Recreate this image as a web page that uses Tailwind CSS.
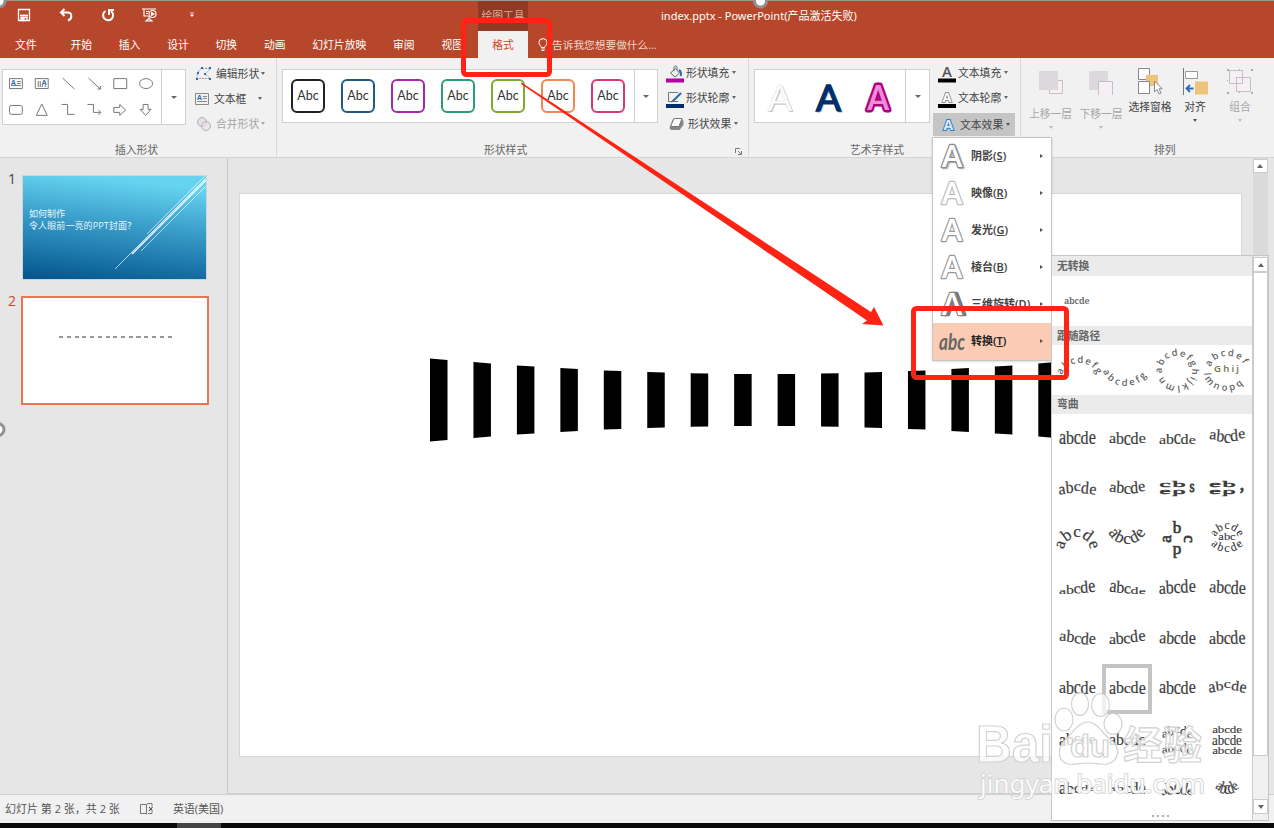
<!DOCTYPE html>
<html lang="zh-CN">
<head>
    <meta charset="UTF-8"/>
    <meta name="viewport" content="width=device-width, initial-scale=1.0"/>
    <title>index.pptx - PowerPoint</title>
    <script src="https://cdn.jsdelivr.net/npm/@tailwindcss/browser@4"></script>
</head>
<body class="relative w-[1274px] h-[828px] overflow-hidden flex flex-col bg-[#e6e6e6] text-[10.8px] leading-4 text-[#444] font-['Open_Sans','Noto_Sans_CJK_SC',sans-serif] whitespace-nowrap">

<!-- 标题栏 -->
<header class="h-[58px] shrink-0 bg-[#b7472a] text-white border-t border-[#999] flex flex-col">
    <div class="h-[30px] flex items-center">
        <div class="w-[478px] h-full flex items-center pl-[17px] pb-[2px]">
            <svg class="w-[14px] h-[14px]" viewBox="0 0 14 14" fill="none" stroke="#fff" stroke-width="1.3"><path d="M1.500 1.500h11v11h-11z"/><path d="M3 7.500h8" stroke-width="1.800"/><path d="M4 12V9.500h6V12"/><path d="M5 10h2v2.500H5z" fill="#fff"/></svg>
            <svg class="w-[14px] h-[14px] ml-[28px]" viewBox="0 0 14 14" fill="none" stroke="#fff" stroke-width="2"><path d="M5.500 1L2 4.500L5.500 8M2 4.500h6.500c5 0 5 6.500 .5 8"/></svg>
            <svg class="w-[14px] h-[14px] ml-[28px]" viewBox="0 0 14 14" fill="none" stroke="#fff" stroke-width="2"><path d="M4.500 3A5 5 0 1 0 10 3.200"/><path d="M8 7V2h5" stroke-width="1.800"/></svg>
            <svg class="w-[16px] h-[14px] ml-[27px]" viewBox="0 0 16 14" fill="none" stroke="#fff" stroke-width="1.100"><path d="M0 1h14M2 1v7h4M4 3.500h3M4 5.500h2M7 8v3M4 13l3-2.500L10 13z"/><circle cx="10.500" cy="6" r="3.500"/><path d="M9.500 4.500L12 6l-2.500 1.500z" fill="#fff"/></svg>
            <svg class="w-[6px] h-[6px] ml-[31px]" viewBox="0 0 6 6" fill="#fff"><path d="M1 .5h4v.8H1zM.8 2.500h4.400L3 5z"/></svg>
        </div>
        <div class="w-[50px] h-full bg-[#8f3a23] text-[#e0a898] text-center leading-[29px]">绘图工具</div>
        <div class="ml-[133px] text-[11px] font-['Noto_Sans','Noto_Sans_CJK_SC',sans-serif]">index.pptx - PowerPoint(产品激活失败)</div>
    </div>
    <nav class="h-[27px] flex items-center">
        <a class="w-[57px] pl-[15px]">文件</a>
        <a class="px-[13.400px]">开始</a>
        <a class="px-[13.400px]">插入</a>
        <a class="px-[13.400px]">设计</a>
        <a class="px-[13.400px]">切换</a>
        <a class="px-[13.400px]">动画</a>
        <a class="px-[13.400px]">幻灯片放映</a>
        <a class="px-[13.400px]">审阅</a>
        <a class="w-[50px] pl-[13.400px]">视图</a>
        <a class="w-[50px] h-full bg-[#f1f1f1] text-[#d24726] text-center leading-[27px]">格式</a>
        <svg class="w-[10px] h-[14px] ml-[10px]" viewBox="0 0 10 14" fill="none" stroke="#fff"><path d="M3.300 9.500C3.300 8 1 7 1 4.600a4 4 0 0 1 8 0C9 7 6.700 8 6.700 9.500z"/><path d="M3.300 11h3.400M3.600 12.500h2.800"/></svg>
        <span class="ml-[4px] text-[10.700px] text-[#f3d5cc]">告诉我您想要做什么...</span>
    </nav>
</header>

<!-- 功能区 -->
<section class="h-[100px] shrink-0 bg-[#f1f1f1] border-b border-[#d5d5d5] flex">
    <div class="w-[277px] shrink-0 border-r border-[#dadada] flex flex-col justify-between pt-[11px] pl-[2px]">
        <div class="flex h-[56px]">
            <div class="w-[184px] bg-white border border-[#d0d0d0] flex">
                <svg class="w-[159px] h-[54px] border-r border-[#d0d0d0]" viewBox="0 0 159 54" fill="none" stroke="#777" stroke-width="1">
                    <g><path d="M6.500 8.500h13v10h-13zM14 11.500h4M14 13.500h4M8 15.500h10"/><text x="8" y="15" font-size="7" font-weight="bold" fill="#2b6cb5" stroke="none">A</text></g>
                    <g><path d="M32.500 8.500h13v10h-13zM35.500 11v6M37.500 11v6M39.500 15v2M42.500 15v2"/><text x="39" y="15" font-size="7" font-weight="bold" fill="#2b6cb5" stroke="none">A</text></g>
                    <path d="M60 8l12 11M86 8l12 11M98 16v3h-3M111.500 8.500h13v10h-13z"/>
                    <ellipse cx="144" cy="13.500" rx="6.500" ry="5"/>
                    <rect x="6.500" y="35.500" width="13" height="9" rx="2"/>
                    <path d="M39 34l5.500 11.500h-11zM59 34.500h6v10h7M85 34.500h6v8h7M96 40l2.500 2.500L96 45M111.500 37.500h6v-3l6 5.500l-6 5.500v-3h-6zM141 34.500h5v5h3l-5.500 6l-5.500-6h3z"/>
                </svg>
                <i class="m-auto border-x-[3px] border-x-transparent border-t-[3px] border-t-[#666]"></i>
            </div>
            <div class="ml-[9px] -mt-[1px] flex flex-col">
                <div class="h-[11px] flex items-center">
                    <svg class="w-[17px] h-[13px]" viewBox="0 0 17 13" fill="none" stroke="#999"><path d="M2 11.500C2 6 4 2 7 1.500h9L10 7l5 4.500z" stroke-dasharray="2 1"/><g fill="#2b6cb5" stroke="none"><path d="M6 0h2v2H6zM14 0h2v2h-2zM9 6h2v2H9zM14 11h2v2h-2zM1 11h2v2H1zM2 5h2v2H2z"/></g></svg>
                    <span class="ml-[4px]">编辑形状</span><i class="ml-[2px] border-x-[2.500px] border-x-transparent border-t-[3px] border-t-[#666]"></i>
                </div>
                <div class="h-[11px] mt-[14px] flex items-center">
                    <svg class="w-[14px] h-[12px]" viewBox="0 0 14 12" fill="none" stroke="#888"><path d="M.5 .5h13v11H.5zM8 3.500h4M8 5.500h4M2 8.500h10"/><text x="2" y="7" font-size="7" font-weight="bold" fill="#2b6cb5" stroke="none">A</text></svg>
                    <span class="ml-[5px]">文本框</span><i class="ml-[12px] border-x-[2.500px] border-x-transparent border-t-[3px] border-t-[#666]"></i>
                </div>
                <div class="h-[11px] mt-[14px] flex items-center text-[#a6a6a6]">
                    <svg class="w-[14px] h-[14px] ml-[2px]" viewBox="0 0 14 14" fill="#e6e0e6" stroke="#b5b0b5"><circle cx="5" cy="5" r="4.500"/><circle cx="9" cy="9" r="4.500" fill-opacity=".6"/></svg>
                    <span class="ml-[5px]">合并形状</span><i class="ml-[2px] border-x-[2.500px] border-x-transparent border-t-[3px] border-t-[#aaa]"></i>
                </div>
            </div>
        </div>
        <div class="text-center text-[#666] pr-[5px] -mb-px">插入形状</div>
    </div>

    <div class="w-[472px] shrink-0 border-r border-[#dadada] flex flex-col justify-between pt-[11px] pl-[5px]">
        <div class="flex h-[54px]">
            <div class="w-[376px] h-[54px] bg-white border border-[#d0d0d0] flex font-['Lato'] text-[12.5px] text-[#333]">
                <div class="w-[352px] border-r border-[#d0d0d0] flex items-center gap-[16px] pl-[8px]">
                    <span class="w-[34px] h-[34px] rounded-md border-2 border-[#222] text-center leading-[30px]">Abc</span>
                    <span class="w-[34px] h-[34px] rounded-md border-2 border-[#1f5c80] text-center leading-[30px]">Abc</span>
                    <span class="w-[34px] h-[34px] rounded-md border-2 border-[#a626b0] text-center leading-[30px]">Abc</span>
                    <span class="w-[34px] h-[34px] rounded-md border-2 border-[#2a9d78] text-center leading-[30px]">Abc</span>
                    <span class="w-[34px] h-[34px] rounded-md border-2 border-[#80a92f] text-center leading-[30px]">Abc</span>
                    <span class="w-[34px] h-[34px] rounded-md border-2 border-[#ec8a50] text-center leading-[30px]">Abc</span>
                    <span class="w-[34px] h-[34px] rounded-md border-2 border-[#d63a70] text-center leading-[30px]">Abc</span>
                </div>
                <i class="m-auto border-x-[3px] border-x-transparent border-t-[3px] border-t-[#666]"></i>
            </div>
            <div class="ml-[8px]">
                <div class="h-[11px] -mt-[2px] flex items-center">
                    <svg class="w-[18px] h-[18px] mt-[3px]" viewBox="0 0 18 18" fill="none" stroke="#666"><path d="M4.500 8l5-4.500l4 4.500l-4.500 4zM8 6V2.500a1.500 1.500 0 0 1 3 0V5"/><path d="M13 5c2 1 2.500 4 1.500 6" stroke="#2b6cb5" stroke-width="2"/><path d="M0 13.500h18v4H0z" fill="#b4009e" stroke="none"/></svg>
                    <span class="ml-[2px]">形状填充</span><i class="ml-[3px] border-x-[2.500px] border-x-transparent border-t-[3px] border-t-[#666]"></i>
                </div>
                <div class="h-[11px] mt-[14px] flex items-center">
                    <svg class="w-[18px] h-[18px] mt-[3px]" viewBox="0 0 18 18" fill="none" stroke="#777"><path d="M12 2.500H2.500v9H12"/><path d="M15 3L7.500 10.500" stroke="#2b6cb5" stroke-width="2.200"/><path d="M7.500 9.500l-2 2.500l2.500-1.500" stroke="#555"/><path d="M0 14h18v4H0z" fill="#002f6c" stroke="none"/></svg>
                    <span class="ml-[2px]">形状轮廓</span><i class="ml-[3px] border-x-[2.500px] border-x-transparent border-t-[3px] border-t-[#666]"></i>
                </div>
                <div class="h-[11px] mt-[15px] flex items-center">
                    <svg class="w-[15px] h-[14px] ml-[3px]" viewBox="0 0 15 14"><path d="M4 2h9l1.500 2v4l-4 5H2L.5 11z" fill="#888"/><path d="M5 1.500h8L10 9.500H1.500z" fill="#fff" stroke="#777"/></svg>
                    <span class="ml-[4px]">形状效果</span><i class="ml-[3px] border-x-[2.500px] border-x-transparent border-t-[3px] border-t-[#666]"></i>
                </div>
            </div>
        </div>
        <div class="flex items-center text-[#666] pl-[202px] -mb-px">形状样式
            <svg class="w-[7px] h-[7px] ml-[208px] mt-[3px]" viewBox="0 0 7 7" fill="none" stroke="#777"><path d="M.5 5V.5H5M3 3l3 3M6.500 3v3.500H3"/></svg>
        </div>
    </div>

    <div class="w-[272px] shrink-0 border-r border-[#dadada] flex flex-col justify-between pt-[11px] pl-[5px]">
        <div class="flex h-[54px]">
            <div class="w-[176px] h-[54px] bg-white border border-[#d0d0d0] flex">
                <svg class="w-[151px] h-[52px] border-r border-[#d0d0d0]" viewBox="0 0 151 52" font-family="Lato" font-size="37" text-anchor="middle">
                    <text x="26" y="42" fill="#bbb">A</text><text x="25" y="41" fill="#fff" stroke="#ddd" stroke-width=".5">A</text>
                    <text x="75" y="42" fill="#b4b8c4" stroke="#b4b8c4">A</text><text x="74" y="41" fill="#002f6c" stroke="#002f6c" stroke-width="1.500">A</text>
                    <text x="124" y="40.500" fill="#f28ad6" stroke="#a8007f" stroke-width="5" stroke-linejoin="round" paint-order="stroke" font-size="35" font-weight="bold" textLength="22" lengthAdjust="spacingAndGlyphs">A</text>
                </svg>
                <i class="m-auto border-x-[3px] border-x-transparent border-t-[3px] border-t-[#666]"></i>
            </div>
            <div class="ml-[3px]">
                <div class="h-[11px] -mt-[2px] pl-[5px] flex items-center">
                    <svg class="w-[18px] h-[18px] mt-[3px] overflow-visible" viewBox="0 0 18 18"><text x="4" y="12" font-size="15" font-weight="600" fill="#555">A</text><path d="M0 13.500h18v4H0z"/></svg>
                    <span class="ml-[2px]">文本填充</span><i class="ml-[3px] border-x-[2.500px] border-x-transparent border-t-[3px] border-t-[#666]"></i>
                </div>
                <div class="h-[11px] mt-[14px] pl-[5px] flex items-center">
                    <svg class="w-[18px] h-[18px] mt-[3px] overflow-visible" viewBox="0 0 18 18"><text x="4.500" y="12" font-size="13" font-weight="bold" fill="#fff" stroke="#777" stroke-width="1.500" paint-order="stroke">A</text><path d="M0 14h18v4H0z"/></svg>
                    <span class="ml-[2px]">文本轮廓</span><i class="ml-[3px] border-x-[2.500px] border-x-transparent border-t-[3px] border-t-[#666]"></i>
                </div>
                <div class="h-[23px] w-[82px] mt-[10px] pl-[9px] bg-[#c5c5c5] flex items-center">
                    <svg class="w-[13px] h-[14px] overflow-visible" viewBox="0 0 13 14"><text x="1.500" y="12" font-size="14" font-weight="bold" fill="#dce9f7" stroke="#2f7bd0" stroke-width="2" paint-order="stroke">A</text></svg>
                    <span class="ml-[5px]">文本效果</span><i class="ml-[3px] border-x-[2.500px] border-x-transparent border-t-[3px] border-t-[#555]"></i>
                </div>
            </div>
        </div>
        <div class="pl-[96px] text-[#666] -mb-px">艺术字样式</div>
    </div>

    <div class="flex-1 flex flex-col justify-between pt-[9px] pl-[4px] overflow-hidden">
        <div class="flex text-center">
            <div class="w-[51px] flex flex-col items-center text-[#a6a6a6]">
                <svg class="w-[26px] h-[28px]" viewBox="0 0 26 28"><path d="M11.500 13.500h13v13h-13z" fill="#f6eff6" stroke="#c5bfc5"/><path d="M1 4h19v19H1z" fill="#dcd8dc"/></svg>
                <span class="mt-[11px]">上移一层</span><i class="mt-[4px] border-x-[2.500px] border-x-transparent border-t-[3px] border-t-[#bbb]"></i>
            </div>
            <div class="w-[50px] flex flex-col items-center text-[#a6a6a6]">
                <svg class="w-[26px] h-[28px]" viewBox="0 0 26 28"><path d="M1 4h19v19H1z" fill="#dcd8dc"/><path d="M10.500 14.500h14v14h-14z" fill="#f6eff6" stroke="#c5bfc5"/></svg>
                <span class="mt-[11px]">下移一层</span><i class="mt-[4px] border-x-[2.500px] border-x-transparent border-t-[3px] border-t-[#bbb]"></i>
            </div>
            <div class="w-[48px] flex flex-col items-center">
                <svg class="w-[26px] h-[28px]" viewBox="0 0 26 28" fill="#fff" stroke="#888"><path d="M1.500 1.500h11v11h-11z"/><path d="M9 8h12v11H9z" fill="#edc57a" stroke="none"/><path d="M1.500 14.500h11v12h-11z"/><path d="M17.500 14v11l2.500-2.500l2 4.500l2-1l-2-4.200h3.200z"/></svg>
                <span class="mt-[4px]">选择窗格</span>
            </div>
            <div class="w-[42px] flex flex-col items-center">
                <svg class="w-[26px] h-[28px]" viewBox="0 0 26 28" fill="none" stroke="#777"><path d="M1.500 1v27"/><path d="M3.500 4.500h12v7h-12z" fill="#fff" stroke="#999"/><path d="M13 14.500h13v13H13z" fill="#edc57a" stroke="none"/><path d="M11.500 21.500H4.500M8 18l-3.500 3.500L8 25" stroke="#2b6cb5" stroke-width="1.800"/></svg>
                <span class="mt-[4px]">对齐</span><i class="mt-[4px] border-x-[2.500px] border-x-transparent border-t-[3px] border-t-[#555]"></i>
            </div>
            <div class="w-[48px] flex flex-col items-center text-[#a6a6a6]">
                <svg class="w-[26px] h-[28px]" viewBox="0 0 26 28" fill="#f6eff6" stroke="#c5bfc5"><path d="M2.500 3.500h13v13h-13zM9.500 10.500h14v14h-14z"/><path d="M9.500 10.500h6v6h-6z" fill="none"/><g fill="#aaa" stroke="none"><path d="M0 2h2v2H0zM24 2h2v2h-2zM0 25h2v2H0zM24 25h2v2h-2zM12 2h1v1h-1zM12 25h1v1h-1zM0 13h1v1H0z"/></g></svg>
                <span class="mt-[4px]">组合</span><i class="mt-[4px] border-x-[2.500px] border-x-transparent border-t-[3px] border-t-[#bbb]"></i>
            </div>
        </div>
        <div class="text-[#666] pl-[129px] -mb-px">排列</div>
    </div>
</section>

<!-- 工作区 -->
<main class="h-[636px] shrink-0 flex">
    <aside class="w-[228px] shrink-0 border-r border-[#c8c8c8] pl-[8px] pt-[17px] text-sm">
        <div class="flex">
            <span class="w-[14px] -mt-[6px] leading-5">1</span>
            <svg class="w-[185px] h-[105px] border border-[#d0d4d8]" viewBox="0 0 183 103">
                <defs>
                    <linearGradient id="cover" x1=".15" y1="1" x2=".35" y2="0"><stop offset="0" stop-color="#045890"/><stop offset=".6" stop-color="#3b9fcb"/><stop offset="1" stop-color="#66d4f0"/></linearGradient>
                </defs>
                <rect width="183" height="103" fill="url(#cover)"/>
                <g stroke="#fff" fill="none"><path d="M92 93L183 2" stroke-opacity=".7"/><path d="M109 78L183 4" stroke-width="1.500"/><path d="M124 58L182 0" stroke-opacity=".6"/><path d="M118 75L183 10" stroke-opacity=".6"/></g>
                <g fill="#e8f6fc" font-size="9"><text x="6" y="41">如何制作</text><text x="6" y="52.500" textLength="107">令人眼前一亮的PPT封面？</text></g>
            </svg>
        </div>
        <div class="flex mt-[16px]">
            <span class="w-[13px] -mt-[5px] leading-5 text-[#d24726]">2</span>
            <div class="w-[188px] h-[109px] bg-white border-2 border-[#ec7455] pt-[38px] pl-[36px]">
                <div class="w-[113px] h-[2px] bg-[repeating-linear-gradient(90deg,#999_0_4px,#fff_4px_7.750px)]"></div>
            </div>
        </div>
    </aside>
    <div class="flex-1 pt-[35px] pl-[11px] border-b border-[#d0d0d0]">
        <div class="w-[1003px] h-[564px] bg-white border border-[#d6d6d6]">
            <svg class="w-[1001px] h-[562px]" viewBox="240 194 1001 562" id="stripes"></svg>
        </div>
    </div>
    <div class="w-[22px] flex flex-col items-center">
        <div class="w-[15px] h-full bg-[#dadada] mr-[6px] pt-[1px]">
            <div class="w-[15px] h-[14px] bg-white border border-[#ccc] flex items-center justify-center"><i class="border-x-[3.500px] border-x-transparent border-b-[4px] border-b-[#666]"></i></div>
        </div>
    </div>
</main>

<!-- 状态栏 -->
<footer class="h-[29px] shrink-0 bg-[#f1f1f1] border-t border-[#d0d0d0] flex items-center pl-[5px] text-[11px] text-[#555]">
    <span>幻灯片 第 2 张，共 2 张</span>
    <svg class="w-[14px] h-[12px] ml-[20px]" viewBox="0 0 14 12" fill="none" stroke="#777"><path d="M6.500 2v9.500M6.500 1.500H.5v9h6M6.500 1.500L8 .5h4v3M8 10.500h4v-2"/><path d="M9 4l3.500 4M12.500 4L9 8" stroke="#333"/></svg>
    <span class="ml-[19px]">英语(美国)</span>
</footer>
<div class="h-[5px] shrink-0 bg-[#0a0a0a] flex"><i class="w-[44px] ml-[177px] bg-[#444]"></i></div>

<!-- 文本效果菜单 -->
<div class="absolute left-[932px] top-[137px] w-[120px] h-[224px] bg-white border border-[#c6c6c6] shadow-sm text-[11px] font-semibold text-[#444] font-['Noto_Sans','Noto_Sans_CJK_SC',sans-serif]" id="effects"></div>

<!-- 转换库 -->
<div class="absolute left-[1051px] top-[255px] w-[218px] h-[566px] bg-white border border-[#c6c6c6] flex">
    <div class="w-[201px] shrink-0 border-r border-[#ccc] overflow-hidden font-semibold text-[#666]">
        <h4 class="h-[20px] pl-[5px] bg-[#ebebeb] leading-[20px]">无转换</h4>
        <div class="h-[50px] pl-[12px] pt-[17px] text-[9px] font-['Noto_Serif','DejaVu_Serif',serif] tracking-tight">abcde</div>
        <h4 class="h-[19px] pl-[5px] bg-[#ebebeb] leading-[19px]">跟随路径</h4>
        <svg class="w-[199px] h-[50px]" viewBox="1053 345 199 50" font-size="9.500" font-weight="600" fill="#666">
            <defs>
                <path id="arc-up" d="M1063 375A18 16 0 0 1 1098 375"/>
                <path id="arc-down" d="M1104 371A24 21 0 0 0 1150 371"/>
                <path id="ring" d="M1163 373A15 15 0 1 1 1166 380A15 15 0 0 1 1163 373"/>
                <path id="btn-up" d="M1212 367A16.500 12 0 0 1 1245 369"/>
                <path id="btn-down" d="M1205 373A21 17 0 0 0 1249 373"/>
            </defs>
            <text><textPath href="#arc-up" textLength="45">abcdefg</textPath></text>
            <text><textPath href="#arc-down" textLength="53">abcdefg</textPath></text>
            <text><textPath href="#ring" textLength="90">abcdefghijklmn</textPath></text>
            <text><textPath href="#btn-up" textLength="40">abcdef</textPath></text>
            <text x="1215" y="372" textLength="25" fill="#70704a">Ghij</text>
            <text><textPath href="#btn-down" textLength="50">lmnopq</textPath></text>
        </svg>
        <h4 class="h-[19px] pl-[5px] bg-[#ebebeb] leading-[18px]">弯曲</h4>
        <div class="grid grid-cols-[50px_50px_50px_50px] auto-rows-[50px] text-[#444]" id="warps"></div>
    </div>
    <div class="w-[15px] bg-[#f0f0f0] flex flex-col">
        <div class="h-[15px] mt-px bg-white border border-[#ccc] flex items-center justify-center"><i class="border-x-[3.500px] border-x-transparent border-b-[4px] border-b-[#666]"></i></div>
        <div class="h-[484px] bg-white border border-[#ccc]"></div>
        <div class="h-[15px] mt-[43px] bg-white border border-[#ccc] flex items-center justify-center"><i class="border-x-[3.500px] border-x-transparent border-t-[4px] border-t-[#666]"></i></div>
    </div>
    <div class="absolute left-[100px] bottom-[3px] flex gap-[3px]"><i class="size-[2px] bg-[#a5b0be]"></i><i class="size-[2px] bg-[#a5b0be]"></i><i class="size-[2px] bg-[#a5b0be]"></i><i class="size-[2px] bg-[#a5b0be]"></i></div>
</div>

<!-- 水印 -->
<svg class="absolute left-0 top-0 w-[1274px] h-[828px]" viewBox="0 0 1274 828" fill="#fff" fill-opacity=".75" stroke="#d2d2d2" stroke-width="1.200">
    <ellipse cx="1064" cy="719.500" rx="9" ry="11.500"/>
    <ellipse cx="1080" cy="704" rx="8.500" ry="11.500"/>
    <ellipse cx="1100.500" cy="705" rx="9" ry="11.500"/>
    <ellipse cx="1113" cy="724" rx="9" ry="10.500"/>
    <path d="M1088 722c9 0 13 10 22 17c11 8 10 22-3 25c-7 1-12-1-19-1s-13 2-20 1c-11-3-11-16-3-24c8-7 13-18 23-18z"/>
    <g font-family="Liberation Sans" font-weight="bold">
        <text x="976" y="762" font-size="51" textLength="77" lengthAdjust="spacingAndGlyphs">Bai</text>
        <text x="1070" y="757" font-size="31" textLength="40" lengthAdjust="spacingAndGlyphs">du</text>
    </g>
    <text x="1123" y="759" font-size="39" font-weight="bold" textLength="79">经验</text>
    <text x="980" y="793" font-size="25" font-family="Noto Sans" fill-opacity=".9" stroke-width="1.600" paint-order="stroke" textLength="225" lengthAdjust="spacingAndGlyphs">jingyan.baidu.com</text>
</svg>

<!-- 标注 -->
<svg class="absolute left-0 top-0 w-[1274px] h-[828px]" viewBox="0 0 1274 828">
    <g fill="#fff" stroke="#929292" stroke-width="3"><circle cx="760.500" cy="1" r="6"/><circle cx="-2" cy="429.500" r="6"/><circle cx="-1" cy="1" r="6"/></g>
    <path d="M521.500 82.500L871 312L874 307L883.500 325.500L862 324L867 320.500L521 84z" fill="#ff2314"/>
    <g fill="none" stroke="#ff2314" stroke-width="5"><rect x="463.500" y="20.500" width="86" height="54" rx="3"/><rect x="913.500" y="308.500" width="153" height="69" rx="3"/></g>
</svg>

<script>
    // 幻灯片上的竖条：[左上y, 右上y]，上下以 y=400 对称
    const tops = [[358.5, 360], [362, 363.5], [365.5, 366.5], [368, 369], [370.5, 371], [372, 372.5], [373.3, 373.5], [374, 374],
        [374, 374], [373.5, 373.3], [372.5, 372], [371, 370.5], [369, 368], [366.5, 365.5], [363.5, 362]];
    document.getElementById('stripes').innerHTML = tops.map(([l, r], i) => {
        const x = 430 + i * 43.45;
        return `<path d="M${x} ${l}L${x + 17.5} ${r}V${800 - r}L${x} ${800 - l}z"/>`;
    }).join('');

    const letterA = '<text x="14" y="27" text-anchor="middle" font-size="31" font-weight="600" font-family="Open Sans" stroke-width="2.4" stroke-linejoin="round" paint-order="stroke"';
    const effects = [
        ['阴影', 'S', `${letterA} fill="#bbb" stroke="#bbb" transform="translate(1.2 .8)">A</text>${letterA} fill="#fff" stroke="#888">A</text>`],
        ['映像', 'R', `${letterA} fill="#fff" stroke="#bbb">A</text>`],
        ['发光', 'G', `${letterA} fill="#fff" stroke="#999">A</text>`],
        ['棱台', 'B', `${letterA} fill="#fff" stroke="#999">A</text>`],
        ['三维旋转', 'D', `${letterA} fill="#777" stroke="#777" transform="translate(3 0)">A</text>${letterA} fill="#fff" stroke="#888">A</text>`],
        ['转换', 'T', '<text x="1" y="25" font-size="22" font-style="italic" font-weight="bold" fill="#666" textLength="26" lengthAdjust="spacingAndGlyphs" font-family="Lato">abc</text>'],
    ];
    document.getElementById('effects').innerHTML = effects.map(([name, key, icon], i) => `
        <div class="h-[37px] flex items-center pl-[5px] pb-px ${i === 5 ? 'bg-[#fccbb4] text-[#222]' : ''}">
            <svg class="w-[30px] h-[32px] overflow-visible" viewBox="0 0 30 32">${icon}</svg>
            <span class="w-[67px] ml-[3px]">${name}(<u>${key}</u>)</span>
            <i class="ml-[2px] border-y-[2.5px] border-y-transparent border-l-[3px] border-l-[#555]"></i>
        </div>`).join('');

    // 每个字母：基线y, 高度, 旋转, x，单元格 50x50
    const xs = [10.5, 18, 25.3, 32.6, 40.2];
    const word = (base, high, rot = [], x = xs, w = 1.6) => 'abcde'.split('').map((c, i) =>
        `<text transform="translate(${x[i]} ${base[i] - 0.7}) rotate(${rot[i] || 0}) scale(${w} ${high[i]})">${c}</text>`).join('');
    // 沿圆弧排列的字母，flip 时字母朝圆心
    const ring = (str, cx, cy, r, from, to, size, flip) => str.split('').map((c, i) => {
        const a = from + (to - from) * i / (str.length - 1);
        const t = a * Math.PI / 180;
        return `<text transform="translate(${cx + r * Math.sin(t)} ${cy - r * Math.cos(t)}) rotate(${flip ? a - 180 : a}) scale(${size})">${c}</text>`;
    }).join('');
    const small = [13, 19, 25, 31, 37];

    const warps = [
        word([31, 31, 31, 31, 31], [2, 1.95, 2, 1.95, 2]),
        word([29.5, 30.5, 31.5, 30.5, 29.5], [1.5, 1.6, 2, 1.65, 1.4]),
        word([31, 31, 31, 31, 31], [1.2, 1.5, 2, 1.5, 1.2]),
        word([26, 28, 30, 27.5, 25], [1.5, 1.7, 1.9, 1.7, 1.5], [5, 5, 0, -5, -8]),
        word([31, 29.5, 28, 30, 31], [1.6, 1.7, 1.5, 1.7, 1.6], [-8, -5, 0, 5, 8]),
        word([28.5, 29.5, 31, 30, 28], [1.5, 1.7, 1.6, 1.7, 1.6], [6, 4, 0, -4, -8]),
        '<g stroke="#3c3c3c" stroke-width=".5"><text transform="translate(13 23) scale(2.5 .9)">c</text><text transform="translate(27 22.500) scale(2.600 .8)">b</text><text transform="translate(27 25.500) scale(2.600 -.8)">b</text><text transform="translate(40 28) scale(1.300 1.600)">s</text><text transform="translate(13 30) scale(2.500 .9)">e</text></g>',
        '<g stroke="#3c3c3c" stroke-width=".5"><text transform="translate(13 23) scale(2.600 .9)">e</text><text transform="translate(27 22.500) scale(2.600 .8)">b</text><text transform="translate(27 25.500) scale(2.600 -.8)">b</text><text transform="translate(40 26) scale(1.800 1.800)">,</text><text transform="translate(13 30) scale(2.600 .9)">e</text></g>',
        ring('abcde', 25, 36, 13, -72, 72, 1.7),
        ring('abcde', 25, 9, 21, 233, 127, 1.7, true),
        '<g stroke="#3c3c3c" stroke-width=".4">' + ring('abcd', 25, 25, 6.5, -90, 180, 1.7) + '</g>',
        ring('abcde', 25, 27, 12, -58, 58, 1.15) + '<text transform="translate(25 26) scale(1.25 1)">abc</text>' + ring('abcde', 25, 17, 21, 223, 137, 1.2, true),
        word([30.5, 30.5, 30, 29.5, 28.5], [.9, 1.2, 1.5, 1.7, 1.9], [0, 0, -2, -4, -6]),
        word([28.5, 29.5, 30, 30.5, 30.5], [1.9, 1.7, 1.5, 1.1, .9], [6, 4, 2, 0, 0]),
        word([30.5, 30, 29.5, 29.3, 29], [1.7, 1.85, 1.9, 1.9, 1.9], [-3, -3, -2, -2, 0]),
        word([29, 29.5, 30, 30.5, 31], [1.7, 1.8, 1.9, 1.9, 1.9], [3, 3, 2, 2, 0]),
        word([27.5, 28.5, 30, 31, 31], [1.5, 1.7, 1.6, 1.7, 1.6], [4, 6, 6, 4, 0]),
        word([31, 30.5, 30, 28.5, 27.5], [1.5, 1.7, 1.6, 1.7, 1.6], [0, -4, -6, -6, -4]),
        word([30, 30.5, 31, 31, 31], [1.7, 1.8, 1.9, 1.9, 1.9], [3, 3, 0, 0, 0]),
        word([31, 31, 31, 30.5, 30.5], [1.7, 1.8, 1.9, 1.9, 1.9], [0, 0, 0, -3, -3]),
        word([30, 30.5, 31, 30.5, 30], [1.7, 1.8, 2, 1.8, 1.7]),
        word([30.5, 30, 29.5, 30, 30.5], [1.8, 1.65, 1.5, 1.7, 1.8]),
        word([30, 30.5, 31, 30.5, 30], [1.8, 1.9, 2, 1.9, 1.8]),
        word([29, 27, 25, 27, 29], [1.7, 1.3, 1.2, 1.4, 1.7], [-8, -6, 0, 6, 10]),
        word([33, 32, 31, 31, 31], [1.8, 1.7, 1.6, 1.5, 1.4]),
        word([32, 32, 32, 32, 32], [1.6, 1.6, 1.5, 1.4, 1.6]),
        word([24, 22, 20, 22, 24], [1.2, 1.3, 1.3, 1.3, 1.2], [-8, -4, 0, 4, 8], small, 1.3) + word([40, 39, 38, 39, 40], [1.2, 1.3, 1.3, 1.3, 1.2], [-8, -4, 0, 4, 8], small, 1.3),
        word([20, 20, 20, 20, 20], [1, 1, 1, 1, 1], [], small, 1.3) + word([31.5, 31.5, 31.5, 31.5, 31.5], [1.5, 1.4, 1.5, 1.4, 1.5], [], small, 1.3) + word([41, 41, 41, 41, 41], [1, 1, 1, 1, 1], [], small, 1.3),
        word([31, 31, 30, 29, 28], [1.9, 1.7, 1.4, 1, .8]),
        word([28, 29, 30, 31, 31], [.8, 1, 1.4, 1.7, 1.9]),
        word([31, 31, 31, 31, 31], [1.1, 1.7, 2.2, 1.7, 1.1], [-25, -12, 0, 12, 25], small, 1.5),
        word([26, 30, 31, 30, 26], [1.4, 1.7, 1.9, 1.7, 1.4], [35, 18, 0, -18, -35], [15, 20, 25, 30, 35], 1.3),
    ];
    document.getElementById('warps').innerHTML = warps.map((w, i) => `
        <div class="${i === 21 ? 'border-4 border-[#c4c4c4]' : ''}">
            <svg class="${i === 21 ? 'w-[50px] h-[50px] -m-[4px]' : 'w-[50px] h-[50px]'}" viewBox="0 0 50 50" font-family="Liberation Serif" font-size="10" font-weight="400" text-anchor="middle" fill="#3c3c3c" stroke="#3c3c3c" stroke-width=".12">${w}</svg>
        </div>`).join('');
</script>
</body>
</html>
